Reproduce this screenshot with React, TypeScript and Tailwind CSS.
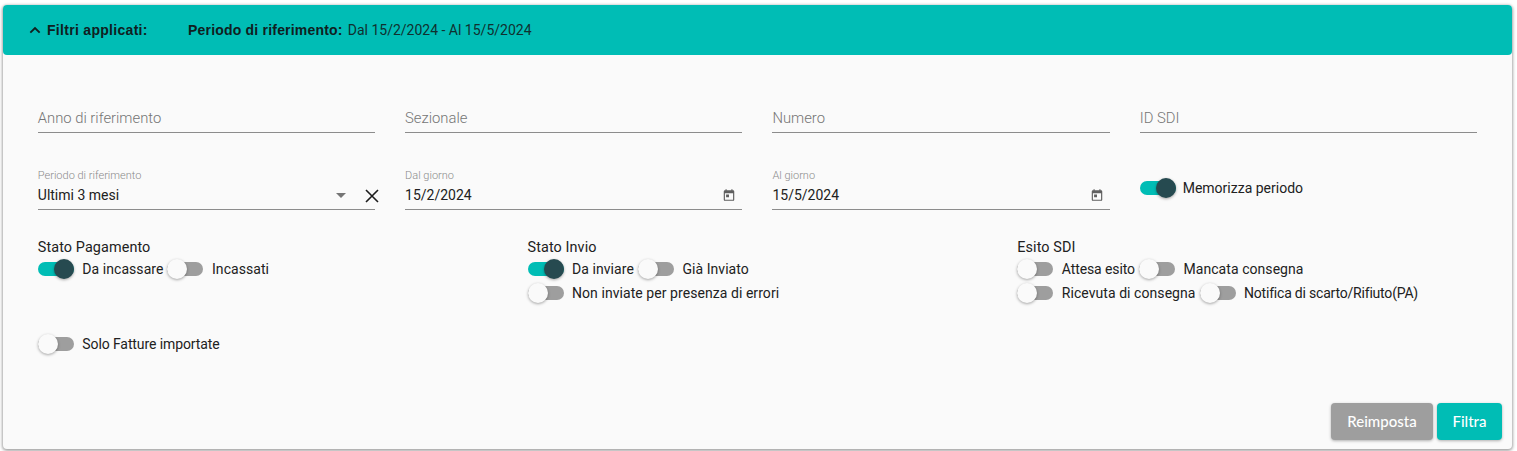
const Toggle = ({ on = false }: { on?: boolean }) => (
  <span className={`relative block h-[14px] w-[36px] shrink-0 rounded-full ${on ? "bg-[#00bdb5]" : "bg-[#9e9e9e]"}`}>
    <span
      className={`absolute top-[-3px] h-[20px] w-[20px] rounded-full shadow-[0_1px_3px_rgba(0,0,0,0.35)] ${on ? "right-0 bg-[#264a50]" : "left-0 bg-[#fafafa]"}`}
    />
  </span>
);

const SwitchItem = ({ label, on, tracking = "tracking-[0.06px]" }: { label: string; on?: boolean; tracking?: string }) => (
  <div className="flex h-[24px] items-center gap-[8.5px] pr-[4px]">
    <Toggle on={on} />
    <span className={`text-[14px] leading-[20px] text-[#212121] ${tracking}`}>{label}</span>
  </div>
);

const TextField = ({ label }: { label: string }) => (
  <div className="flex h-[32px] items-center border-b border-[#8c8c8c] pt-[4px]">
    <span className="text-[14.8px] font-light text-[#757575]">{label}</span>
  </div>
);

const LabelField = ({ label, value, children }: { label: string; value: string; children: React.ReactNode }) => (
  <div className="flex h-[44px] flex-col border-b border-[#8c8c8c]">
    <span className="h-[18px] pt-[3px] text-[11px] font-light leading-[14px] text-[#8a8a8a]">{label}</span>
    <div className="flex h-[22px] items-center justify-between">
      <span className="text-[14px] text-[#212121]">{value}</span>
      {children}
    </div>
  </div>
);

const CalendarIcon = () => (
  <svg viewBox="0 0 24 24" className="mr-[6px] h-[14px] w-[14px] fill-[#5f5f5f]">
    <path d="M19 4h-1V2h-2v2H8V2H6v2H5a2 2 0 0 0-2 2v14a2 2 0 0 0 2 2h14a2 2 0 0 0 2-2V6a2 2 0 0 0-2-2zm0 16H5V9h14v11zM7 11h5v5H7z" />
  </svg>
);

const GroupTitle = ({ children }: { children: React.ReactNode }) => (
  <div className="h-[19px] text-[14.4px] leading-[19px] tracking-[0.1px] text-[#212121]">{children}</div>
);

export default function App() {
  return (
    <div className="h-[451px] w-[1517px] overflow-hidden bg-white pb-[2px] pl-[3px] pr-[5px] pt-[5px] font-['Roboto',sans-serif]">
      <div className="flex h-[444px] flex-col rounded-[4px] bg-[#fafafa] shadow-[0_1px_3px_1px_rgba(0,0,0,0.35)]">
        <header className="flex h-[50px] shrink-0 items-center rounded-[4px] bg-[#00bdb5] pl-[24px] text-[14px] text-[#10302f]">
          <svg viewBox="0 0 24 24" className="h-[16px] w-[16px] fill-none stroke-[#10201f] stroke-[2.8]">
            <path d="M5 16l7-7 7 7" />
          </svg>
          <span className="ml-[4px] w-[141px] font-['Liberation_Sans',sans-serif] font-bold tracking-[0.3px] text-[#10201f]">Filtri applicati:</span>
          <span className="font-['Liberation_Sans',sans-serif] font-bold tracking-[0.2px] text-[#10201f]">Periodo di riferimento:</span>
          <span className="ml-[5px]">Dal 15/2/2024 - Al 15/5/2024</span>
        </header>

        <main className="flex flex-1 flex-col pl-[34.8px] pr-[35px]">
          <div className="mt-[46px] grid grid-cols-4 gap-x-[30px]">
            <TextField label="Anno di riferimento" />
            <TextField label="Sezionale" />
            <TextField label="Numero" />
            <TextField label="ID SDI" />
          </div>

          <div className="mt-[33px] grid grid-cols-4 gap-x-[30px]">
            <LabelField label="Periodo di riferimento" value="Ultimi 3 mesi">
              <div className="flex items-center gap-[19px]">
                <span className="h-0 w-0 border-x-[5px] border-t-[5px] border-x-transparent border-t-[#757575]" />
                <svg viewBox="0 0 14 14" className="mr-[-4px] mt-px h-[14px] w-[14px] stroke-[#1c1c1c] stroke-[1.6]">
                  <path d="M1 1l12 12M13 1L1 13" />
                </svg>
              </div>
            </LabelField>
            <LabelField label="Dal giorno" value="15/2/2024">
              <CalendarIcon />
            </LabelField>
            <LabelField label="Al giorno" value="15/5/2024">
              <CalendarIcon />
            </LabelField>
            <div className="flex h-[44px] items-center gap-[7px]">
              <Toggle on />
              <span className="text-[14px] text-[#212121]">Memorizza periodo</span>
            </div>
          </div>

          <div className="mt-[28px] grid grid-cols-3 gap-x-[30px]">
            <section>
              <GroupTitle>Stato Pagamento</GroupTitle>
              <div className="flex flex-wrap">
                <SwitchItem label="Da incassare" on />
                <SwitchItem label="Incassati" />
              </div>
            </section>
            <section>
              <GroupTitle>Stato Invio</GroupTitle>
              <div className="flex flex-wrap">
                <SwitchItem label="Da inviare" on />
                <SwitchItem label="Già Inviato" />
                <div className="w-full">
                  <SwitchItem label="Non inviate per presenza di errori" />
                </div>
              </div>
            </section>
            <section>
              <GroupTitle>Esito SDI</GroupTitle>
              <div className="flex flex-wrap">
                <SwitchItem label="Attesa esito" tracking="tracking-[-0.1px]" />
                <SwitchItem label="Mancata consegna" />
                <div className="flex w-full">
                  <SwitchItem label="Ricevuta di consegna" />
                  <SwitchItem label="Notifica di scarto/Rifiuto(PA)" tracking="tracking-[-0.2px]" />
                </div>
              </div>
            </section>
          </div>

          <div className="mt-[27px]">
            <SwitchItem label="Solo Fatture importate" tracking="tracking-[-0.1px]" />
          </div>

          <div className="mt-auto mb-[9px] mr-[-25px] flex justify-end gap-[4px]">
            <button className="h-[37px] w-[102px] rounded-[4px] bg-[#9e9e9e] font-['Lato',sans-serif] text-[15px] font-medium text-white shadow-[0_1px_3px_rgba(0,0,0,0.3)]">Reimposta</button>
            <button className="h-[37px] w-[65px] rounded-[4px] bg-[#00bdb5] font-['Lato',sans-serif] text-[15px] font-medium text-white shadow-[0_1px_3px_rgba(0,0,0,0.3)]">Filtra</button>
          </div>
        </main>
      </div>
    </div>
  );
}
